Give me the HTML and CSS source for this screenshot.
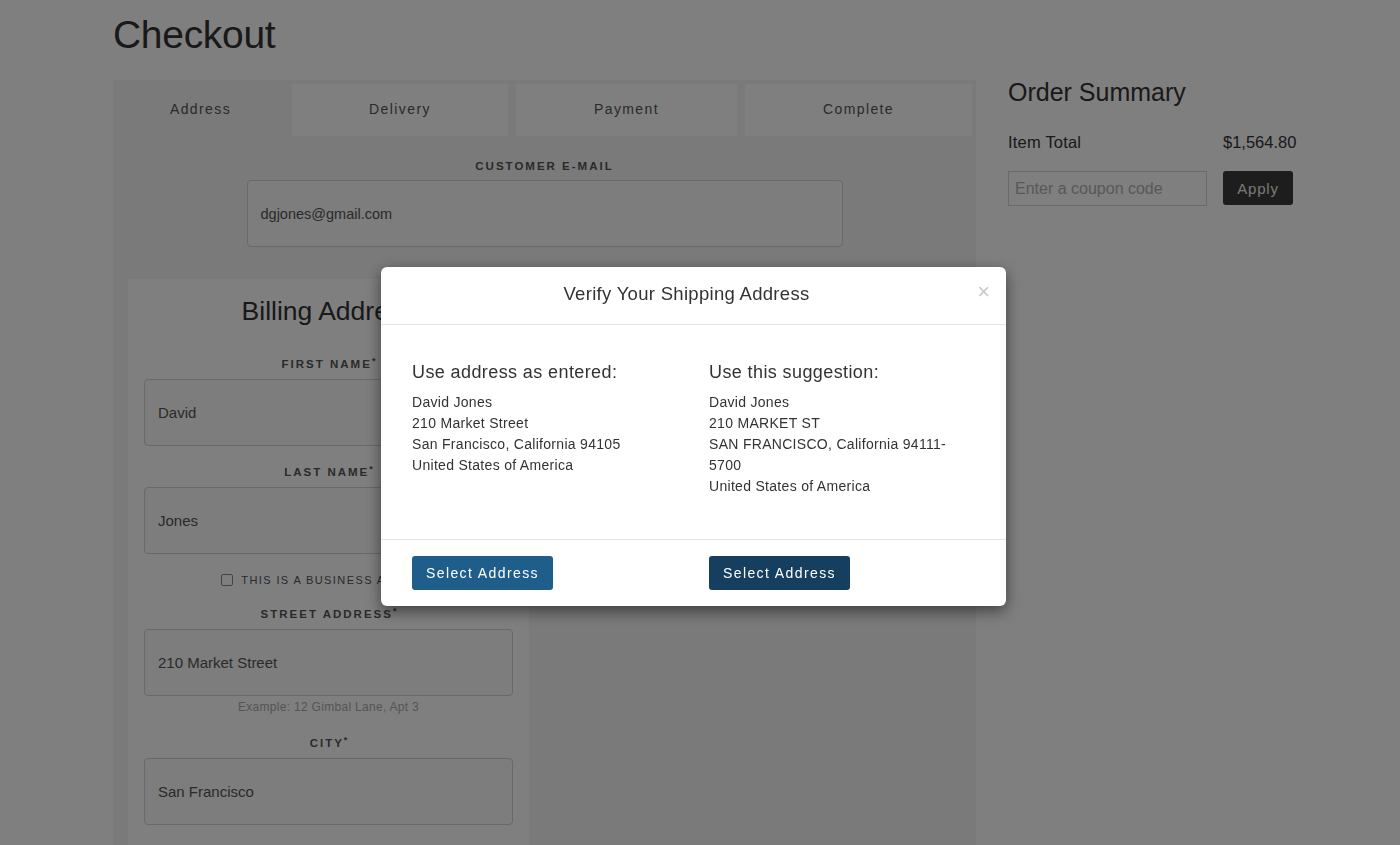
FILE: index.html
```html
<!DOCTYPE html>
<html lang="en">
<head>
<meta charset="utf-8">
<title>Checkout</title>
<link rel="stylesheet" href="styles.css">
</head>
<body>
<div class="page">
  <h1 class="title">Checkout</h1>
  <div class="layout">
    <main class="panel">
      <nav class="tabs">
        <div class="tab tab-active">Address</div>
        <div class="tab">Delivery</div>
        <div class="tab">Payment</div>
        <div class="tab">Complete</div>
      </nav>
      <section class="email">
        <label class="label">CUSTOMER E-MAIL</label>
        <div class="input input-email">dgjones@gmail.com</div>
      </section>
      <section class="billing">
        <h2 class="billing-title">Billing Address</h2>
        <label class="label label-first">FIRST NAME<sup>*</sup></label>
        <div class="input">David</div>
        <label class="label">LAST NAME<sup>*</sup></label>
        <div class="input">Jones</div>
        <div class="check-row"><span class="checkbox"></span><span class="check-text">THIS IS A BUSINESS ADDRESS</span></div>
        <label class="label label-street">STREET ADDRESS<sup>*</sup></label>
        <div class="input">210 Market Street</div>
        <div class="hint">Example: 12 Gimbal Lane, Apt 3</div>
        <label class="label label-city">CITY<sup>*</sup></label>
        <div class="input">San Francisco</div>
      </section>
    </main>
    <aside class="summary">
      <h2 class="summary-title">Order Summary</h2>
      <div class="summary-row">
        <span class="summary-label">Item Total</span>
        <span class="summary-value">$1,564.80</span>
      </div>
      <div class="coupon">
        <div class="coupon-input">Enter a coupon code</div>
        <button class="apply">Apply</button>
      </div>
    </aside>
  </div>
</div>

<div class="overlay">
  <div class="modal">
    <div class="modal-header">
      <h3 class="modal-title">Verify Your Shipping Address</h3>
      <span class="close">&times;</span>
    </div>
    <div class="modal-body">
      <div class="col">
        <h4 class="col-title">Use address as entered:</h4>
        <p class="addr">David Jones<br>210 Market Street<br>San Francisco, California 94105<br>United States of America</p>
      </div>
      <div class="col">
        <h4 class="col-title">Use this suggestion:</h4>
        <p class="addr">David Jones<br>210 MARKET ST<br>SAN FRANCISCO, California 94111-5700<br>United States of America</p>
      </div>
    </div>
    <div class="modal-footer">
      <div class="col"><button class="btn btn-primary">Select Address</button></div>
      <div class="col"><button class="btn btn-dark">Select Address</button></div>
    </div>
  </div>
</div>
</body>
</html>
```
FILE: styles.css
```css
html, body {
  margin: 0;
  padding: 0;
  overflow: hidden;
  height: 100%;
}
body {
  background: #fff;
  font-family: "Liberation Sans", Arial, Helvetica, sans-serif;
  color: #333;
}
.page {
  padding-left: 113px;
}
.title {
  margin: 16px 0 26px;
  font-size: 39px;
  line-height: 38px;
  font-weight: normal;
  color: #333;
  letter-spacing: -0.3px;
}
.layout {
  display: flex;
  gap: 32px;
  align-items: flex-start;
}
.panel {
  width: 863px;
  background: #f4f4f4;
  padding: 4px 0 0;
  box-sizing: border-box;
  height: 900px;
}
.tabs {
  display: grid;
  grid-template-columns: 167px 216px 221px 227px;
  column-gap: 8px;
  padding: 0 4px;
}
.tab {
  height: 52px;
  display: flex;
  align-items: center;
  justify-content: center;
  padding-bottom: 2px;
  box-sizing: border-box;
  background: #fefefe;
  font-size: 14px;
  letter-spacing: 1.4px;
  color: #555;
}
.tab-active {
  background: #f4f4f4;
}
.email {
  display: flex;
  flex-direction: column;
  align-items: center;
  padding-top: 22px;
}
.label {
  display: block;
  text-align: center;
  font-size: 11.5px;
  font-weight: bold;
  letter-spacing: 2px;
  line-height: 16px;
  color: #555;
  margin-top: 18px;
  margin-bottom: 7px;
}
.email .label {
  margin: 0 0 6px;
}
.label sup {
  font-size: 9px;
  line-height: 0;
  letter-spacing: 0;
  vertical-align: 4px;
}
.input {
  box-sizing: border-box;
  height: 67px;
  border: 1px solid #d2d2d2;
  border-radius: 4px;
  background: #fafafa;
  display: flex;
  align-items: center;
  padding-left: 13px;
  font-size: 15px;
  color: #555;
}
.input-email {
  width: 596px;
  font-size: 14.5px;
}
.billing {
  margin: 32px 0 0 15px;
  width: 401px;
  height: 620px;
  background: #fff;
  padding: 17px 16px 0;
  box-sizing: border-box;
}
.billing-title {
  margin: 0;
  text-align: center;
  font-size: 26.5px;
  line-height: 30px;
  font-weight: normal;
  color: #333;
}
.label-first {
  margin-top: 30px;
}
.check-row {
  margin-top: 17px;
  height: 18px;
  display: flex;
  align-items: center;
  justify-content: center;
  gap: 8px;
  padding-left: 4px;
}
.checkbox {
  width: 10px;
  height: 10px;
  border: 1px solid #888;
  border-radius: 2px;
  background: #fff;
}
.check-text {
  font-size: 11px;
  letter-spacing: 1.4px;
  color: #555;
}
.label-street {
  margin-top: 17px;
}
.hint {
  margin-top: 3px;
  text-align: center;
  font-size: 12px;
  letter-spacing: 0.3px;
  line-height: 16px;
  color: #aaa;
}
.label-city {
  margin-top: 20px;
}
.summary {
  width: 290px;
}
.summary-title {
  margin: 0;
  font-size: 25px;
  line-height: 25px;
  font-weight: normal;
  color: #333;
}
.summary-row {
  margin-top: 27px;
  display: grid;
  grid-template-columns: 215px auto;
  font-size: 16.5px;
  line-height: 20px;
  color: #333;
}
.summary-label {
  letter-spacing: 0.2px;
}
.coupon {
  margin-top: 19px;
  display: flex;
  gap: 16px;
}
.coupon-input {
  box-sizing: border-box;
  width: 199px;
  height: 35px;
  border: 1px solid #d4d4d4;
  padding-left: 6px;
  display: flex;
  align-items: center;
  font-size: 16px;
  color: #b0b0b0;
  background: #fff;
}
.apply {
  width: 70px;
  height: 34px;
  border: 0;
  border-radius: 3px;
  background: #3a3a3a;
  color: #eee;
  font-family: "Liberation Sans", Arial, sans-serif;
  font-size: 15px;
  letter-spacing: 0.8px;
}
.overlay {
  position: fixed;
  inset: 0;
  background: rgba(0, 0, 0, 0.5);
  padding: 267px 0 0 381px;
  box-sizing: border-box;
}
.modal {
  width: 625px;
  background: #fff;
  border-radius: 6px;
  box-shadow: 0 5px 15px rgba(0, 0, 0, 0.5);
}
.modal-header {
  position: relative;
  padding: 15px 34px 18px 20px;
  border-bottom: 1px solid #e5e5e5;
}
.modal-title {
  margin: 0;
  text-align: center;
  font-size: 18.5px;
  letter-spacing: 0.3px;
  line-height: 24px;
  font-weight: normal;
  color: #333;
}
.close {
  position: absolute;
  right: 16px;
  top: 13px;
  font-size: 22px;
  line-height: 24px;
  color: #c8c8c8;
}
.modal-body {
  display: grid;
  grid-template-columns: 297px 250px;
  padding: 37px 31px 42px;
}
.col-title {
  margin: 0;
  font-size: 18px;
  letter-spacing: 0.4px;
  line-height: 20px;
  font-weight: normal;
  color: #333;
}
.addr {
  margin: 10px 0 0;
  font-size: 14px;
  letter-spacing: 0.3px;
  line-height: 21px;
  color: #333;
}
.modal-footer {
  display: grid;
  grid-template-columns: 297px 250px;
  padding: 16px 31px 16px;
  border-top: 1px solid #e5e5e5;
}
.btn {
  height: 34px;
  padding: 0 14px;
  border: 0;
  border-radius: 3px;
  color: #fff;
  font-family: "Liberation Sans", Arial, sans-serif;
  font-size: 14px;
  letter-spacing: 1.4px;
}
.btn-primary {
  background: #1f5e8a;
}
.btn-dark {
  background: #163f5f;
}
```
